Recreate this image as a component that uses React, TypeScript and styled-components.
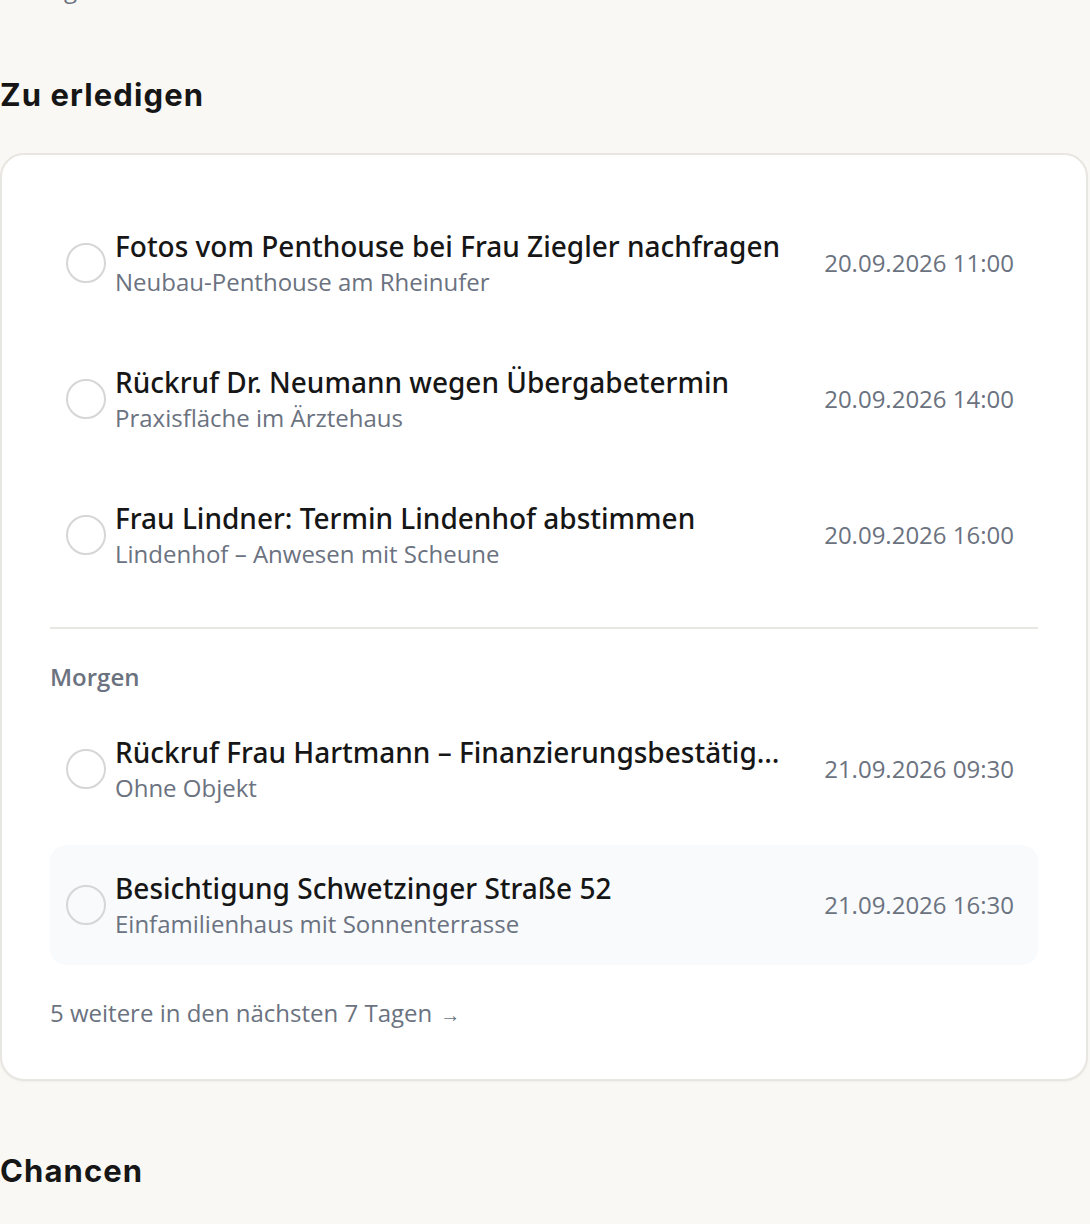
import React from "react";
import styled, { createGlobalStyle } from "styled-components";

const GlobalStyle = createGlobalStyle`
    html, body {
        margin: 0;
        padding: 0;
        background: #f9f8f5;
    }
    body {
        font-family: "Open Sans", "Noto Sans", sans-serif;
        color: #161616;
        overflow: hidden;
    }
`;

const Page = styled.div`
    width: 1090px;
    display: flex;
    flex-direction: column;
    gap: 70px;
`;

const Greeting = styled.div`
    margin-top: -27px;
    font-size: 24px;
    line-height: 32px;
    color: #6b7280;
`;

const Section = styled.section`
    display: flex;
    flex-direction: column;
    gap: 38px;
`;

const SectionTitle = styled.h2`
    margin: 0;
    font-family: Inter, "Noto Sans", sans-serif;
    font-weight: 700;
    font-size: 31px;
    line-height: 40px;
    letter-spacing: 1.1px;
    color: #161616;
`;

const Card = styled.div`
    width: 1088px;
    box-sizing: border-box;
    background: #ffffff;
    border: 2px solid #e8e6e0;
    border-radius: 24px;
    padding: 48px;
    box-shadow: 0 1px 2px rgba(0, 0, 0, 0.04);
`;

const List = styled.div`
    display: flex;
    flex-direction: column;
    gap: 16px;
`;

const Row = styled.div<{ $active?: boolean }>`
    display: flex;
    align-items: center;
    padding: 24px 24px 24px 16px;
    border-radius: 16px;
    background: ${(p) => (p.$active ? "#f8fafc" : "transparent")};
`;

const Check = styled.span`
    flex: none;
    width: 40px;
    height: 40px;
    box-sizing: border-box;
    border: 2px solid #d6d6d6;
    border-radius: 50%;
    margin-right: 9px;
`;

const Texts = styled.div`
    flex: 1;
    min-width: 0;
    display: flex;
    flex-direction: column;
`;

const TaskTitle = styled.div`
    font-family: "Noto Sans", "Open Sans", sans-serif;
    font-size: 28px;
    font-weight: 500;
    line-height: 38px;
    color: #161616;
    white-space: nowrap;
    overflow: hidden;
    text-overflow: ellipsis;
`;

const TaskSub = styled.div`
    font-size: 24px;
    line-height: 34px;
    color: #6b7280;
    white-space: nowrap;
`;

const Due = styled.div`
    flex: none;
    margin-left: 40px;
    font-size: 24px;
    line-height: 34px;
    color: #6b7280;
`;

const Divider = styled.hr`
    margin: 32px 0;
    border: none;
    border-top: 2px solid #e6e6e3;
`;

const GroupLabel = styled.div`
    font-size: 24px;
    line-height: 32px;
    font-weight: 600;
    color: #6b7280;
    margin-bottom: 16px;
`;

const MoreLink = styled.a`
    display: block;
    margin-top: 32px;
    font-size: 24px;
    line-height: 32px;
    color: #6b7280;
    text-decoration: none;
`;

const Arrow = styled.span`
    font-size: 20px;
    margin-left: 8px;
`;

type Task = { title: string; object: string; due: string; active?: boolean };

const today: Task[] = [
    {
        title: "Fotos vom Penthouse bei Frau Ziegler nachfragen",
        object: "Neubau-Penthouse am Rheinufer",
        due: "20.09.2026 11:00",
    },
    {
        title: "Rückruf Dr. Neumann wegen Übergabetermin",
        object: "Praxisfläche im Ärztehaus",
        due: "20.09.2026 14:00",
    },
    {
        title: "Frau Lindner: Termin Lindenhof abstimmen",
        object: "Lindenhof – Anwesen mit Scheune",
        due: "20.09.2026 16:00",
    },
];

const tomorrow: Task[] = [
    {
        title: "Rückruf Frau Hartmann – Finanzierungsbestätigung einholen",
        object: "Ohne Objekt",
        due: "21.09.2026 09:30",
    },
    {
        title: "Besichtigung Schwetzinger Straße 52",
        object: "Einfamilienhaus mit Sonnenterrasse",
        due: "21.09.2026 16:30",
        active: true,
    },
];

const TaskRow = ({ task }: { task: Task }) => (
    <Row $active={task.active}>
        <Check />
        <Texts>
            <TaskTitle>{task.title}</TaskTitle>
            <TaskSub>{task.object}</TaskSub>
        </Texts>
        <Due>{task.due}</Due>
    </Row>
);

export default function App() {
    return (
        <>
            <GlobalStyle />
            <Page>
                <Greeting>Ihr Tag im Überblick</Greeting>
                <Section>
                    <SectionTitle>Zu erledigen</SectionTitle>
                    <Card>
                        <List>
                            {today.map((t) => (
                                <TaskRow key={t.title} task={t} />
                            ))}
                        </List>
                        <Divider />
                        <GroupLabel>Morgen</GroupLabel>
                        <List>
                            {tomorrow.map((t) => (
                                <TaskRow key={t.title} task={t} />
                            ))}
                        </List>
                        <MoreLink href="#">
                            5 weitere in den nächsten 7 Tagen
                            <Arrow>→</Arrow>
                        </MoreLink>
                    </Card>
                </Section>
                <Section>
                    <SectionTitle>Chancen</SectionTitle>
                </Section>
            </Page>
        </>
    );
}
